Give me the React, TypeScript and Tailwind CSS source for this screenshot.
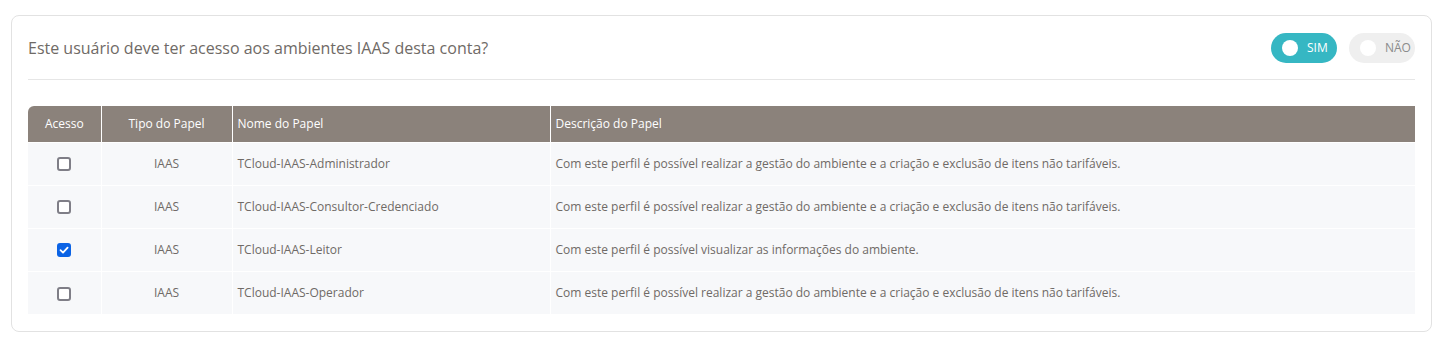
import { useState } from 'react';

interface Role {
  tipo: string;
  nome: string;
  descricao: string;
  checked: boolean;
}

const roles: Role[] = [
  {
    tipo: 'IAAS',
    nome: 'TCloud-IAAS-Administrador',
    descricao: 'Com este perfil é possível realizar a gestão do ambiente e a criação e exclusão de itens não tarifáveis.',
    checked: false,
  },
  {
    tipo: 'IAAS',
    nome: 'TCloud-IAAS-Consultor-Credenciado',
    descricao: 'Com este perfil é possível realizar a gestão do ambiente e a criação e exclusão de itens não tarifáveis.',
    checked: false,
  },
  {
    tipo: 'IAAS',
    nome: 'TCloud-IAAS-Leitor',
    descricao: 'Com este perfil é possível visualizar as informações do ambiente.',
    checked: true,
  },
  {
    tipo: 'IAAS',
    nome: 'TCloud-IAAS-Operador',
    descricao: 'Com este perfil é possível realizar a gestão do ambiente e a criação e exclusão de itens não tarifáveis.',
    checked: false,
  },
];

const Toggle = ({ label, active, onClick }: { label: string; active: boolean; onClick: () => void }) => (
  <button
    onClick={onClick}
    className={`flex items-center h-[30px] w-[66px] rounded-full pl-[11px] gap-[9px] text-[12px] ${
      active ? 'bg-[#36b7c3] text-white' : 'bg-[#efefef] text-[#8b8b8b]'
    }`}
  >
    <span className="w-[16px] h-[16px] rounded-full bg-white" />
    <span>{label}</span>
  </button>
);

const Checkbox = ({ checked, onChange }: { checked: boolean; onChange: () => void }) => (
  <span className="relative inline-block w-[14px] h-[14px] align-middle">
    <input
      type="checkbox"
      checked={checked}
      onChange={onChange}
      className="appearance-none block w-[14px] h-[14px] rounded-[3px] border-2 border-[#7f7e87] bg-white checked:bg-[#0b63e5] checked:border-[#0b63e5]"
    />
    {checked && (
      <svg viewBox="0 0 14 14" className="absolute inset-0 w-[14px] h-[14px] pointer-events-none">
        <path d="M3.5 7.2 L6 9.6 L10.6 4.6" fill="none" stroke="white" strokeWidth="1.8" strokeLinecap="round" strokeLinejoin="round" />
      </svg>
    )}
  </span>
);

export default function App() {
  const [access, setAccess] = useState(true);
  const [checks, setChecks] = useState(roles.map((r) => r.checked));

  return (
    <div className="pt-[15px] pl-[11px] pr-[12px] font-['Open_Sans',sans-serif]">
      <div className="border border-[#e2e2e2] rounded-[8px] bg-white px-[16px] pt-[17px] pb-[17px]">
        <div className="flex items-center justify-between pb-[16px] border-b border-[#e6e6e6]">
          <h2 className="text-[16px] text-[#6f6a66]">Este usuário deve ter acesso aos ambientes IAAS desta conta?</h2>
          <div className="flex gap-[12px]">
            <Toggle label="SIM" active={access} onClick={() => setAccess(true)} />
            <Toggle label="NÃO" active={!access} onClick={() => setAccess(false)} />
          </div>
        </div>

        <table className="w-full mt-[26px] border-collapse text-[12px] text-[#6f6a66]">
          <thead>
            <tr className="bg-[#8b827b] text-white h-[36px]">
              <th className="w-[73px] font-normal text-center rounded-tl-[6px]">Acesso</th>
              <th className="w-[131px] font-normal text-center border-l border-white">Tipo do Papel</th>
              <th className="w-[318px] font-normal text-left px-[5px] border-l border-white">Nome do Papel</th>
              <th className="font-normal text-left px-[5px] border-l border-white">Descrição do Papel</th>
            </tr>
          </thead>
          <tbody>
            {roles.map((role, i) => (
              <tr key={role.nome} className="bg-[#f7f8fa] h-[43px] border-t border-white">
                <td className="text-center">
                  <Checkbox
                    checked={checks[i]}
                    onChange={() => setChecks(checks.map((c, j) => (j === i ? !c : c)))}
                  />
                </td>
                <td className="text-center border-l border-white">{role.tipo}</td>
                <td className="px-[5px] border-l border-white">{role.nome}</td>
                <td className="px-[5px] border-l border-white">{role.descricao}</td>
              </tr>
            ))}
          </tbody>
        </table>
      </div>
    </div>
  );
}
